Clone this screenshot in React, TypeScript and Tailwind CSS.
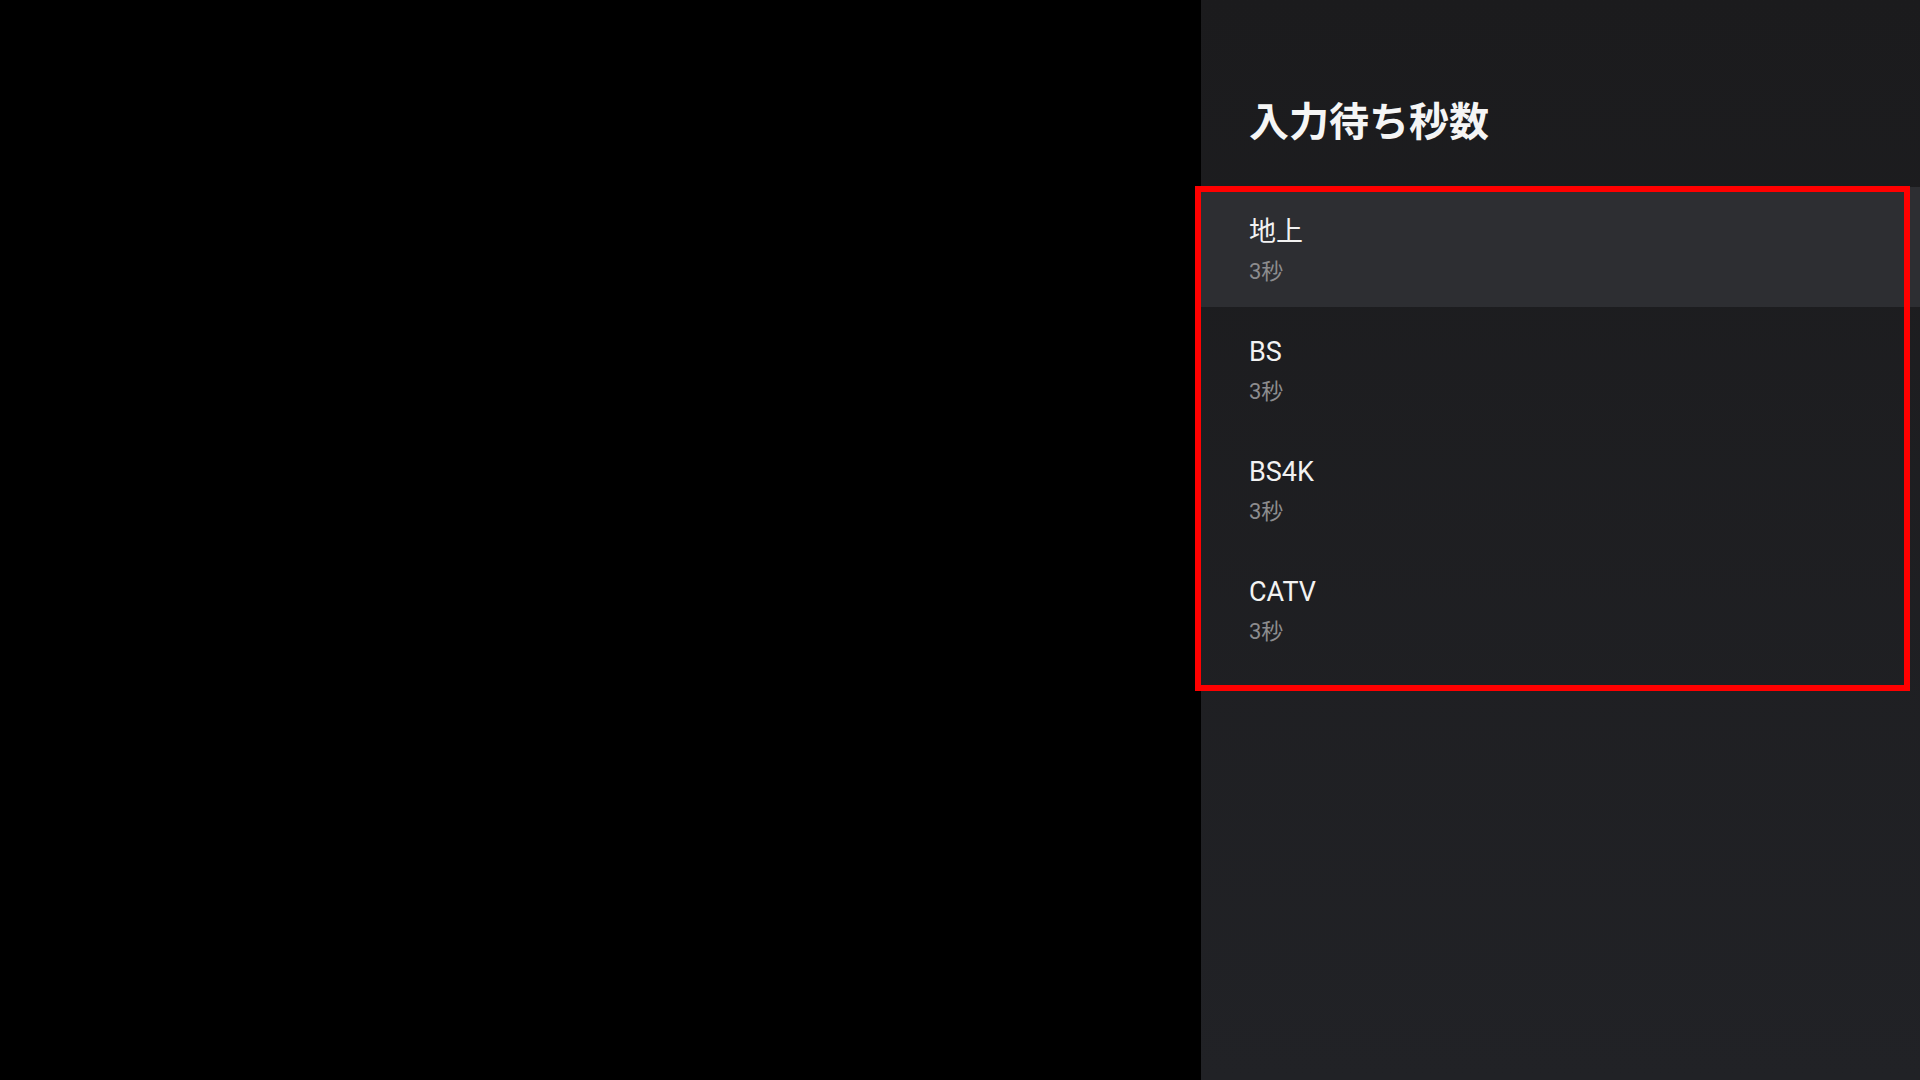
const ROWS = [
  { title: "地上", value: "3秒" },
  { title: "BS", value: "3秒" },
  { title: "BS4K", value: "3秒" },
  { title: "CATV", value: "3秒" },
];

export default function App() {
  const font = "font-['Roboto','Noto_Sans_CJK_JP',sans-serif]";
  return (
    <div className={`flex h-[1080px] w-[1920px] overflow-hidden bg-black ${font}`}>
      {/* Dimmed content behind the side panel */}
      <div className="w-[1201px] shrink-0 bg-black" />

      {/* Settings side panel */}
      <div className="relative flex flex-1 flex-col bg-gradient-to-b from-[#1b1b1d] to-[#212226]">
        <div className="px-[48px] pt-[99px]">
          <h1 className="text-[40px] font-bold leading-[48px] text-[#f5f5f5]">
            入力待ち秒数
          </h1>
        </div>

        <div className="mt-[40px] flex flex-col">
          {ROWS.map((row, i) => (
            <div
              key={row.title}
              className={`flex h-[120px] flex-col px-[48px] pt-[29px] ${
                i === 0 ? "bg-[#2d2e32]" : ""
              }`}
            >
              <span className="text-[27px] leading-[32px] text-[#f2f2f2]">
                {row.title}
              </span>
              <span className="mt-[10px] text-[22px] leading-[28px] text-[#8c8c8e]">
                {row.value}
              </span>
            </div>
          ))}
        </div>

        {/* Annotation box */}
        <div className="pointer-events-none absolute left-[-6px] top-[186px] h-[505px] w-[715px] border-[6px] border-[#ff0000]" />
      </div>
    </div>
  );
}
